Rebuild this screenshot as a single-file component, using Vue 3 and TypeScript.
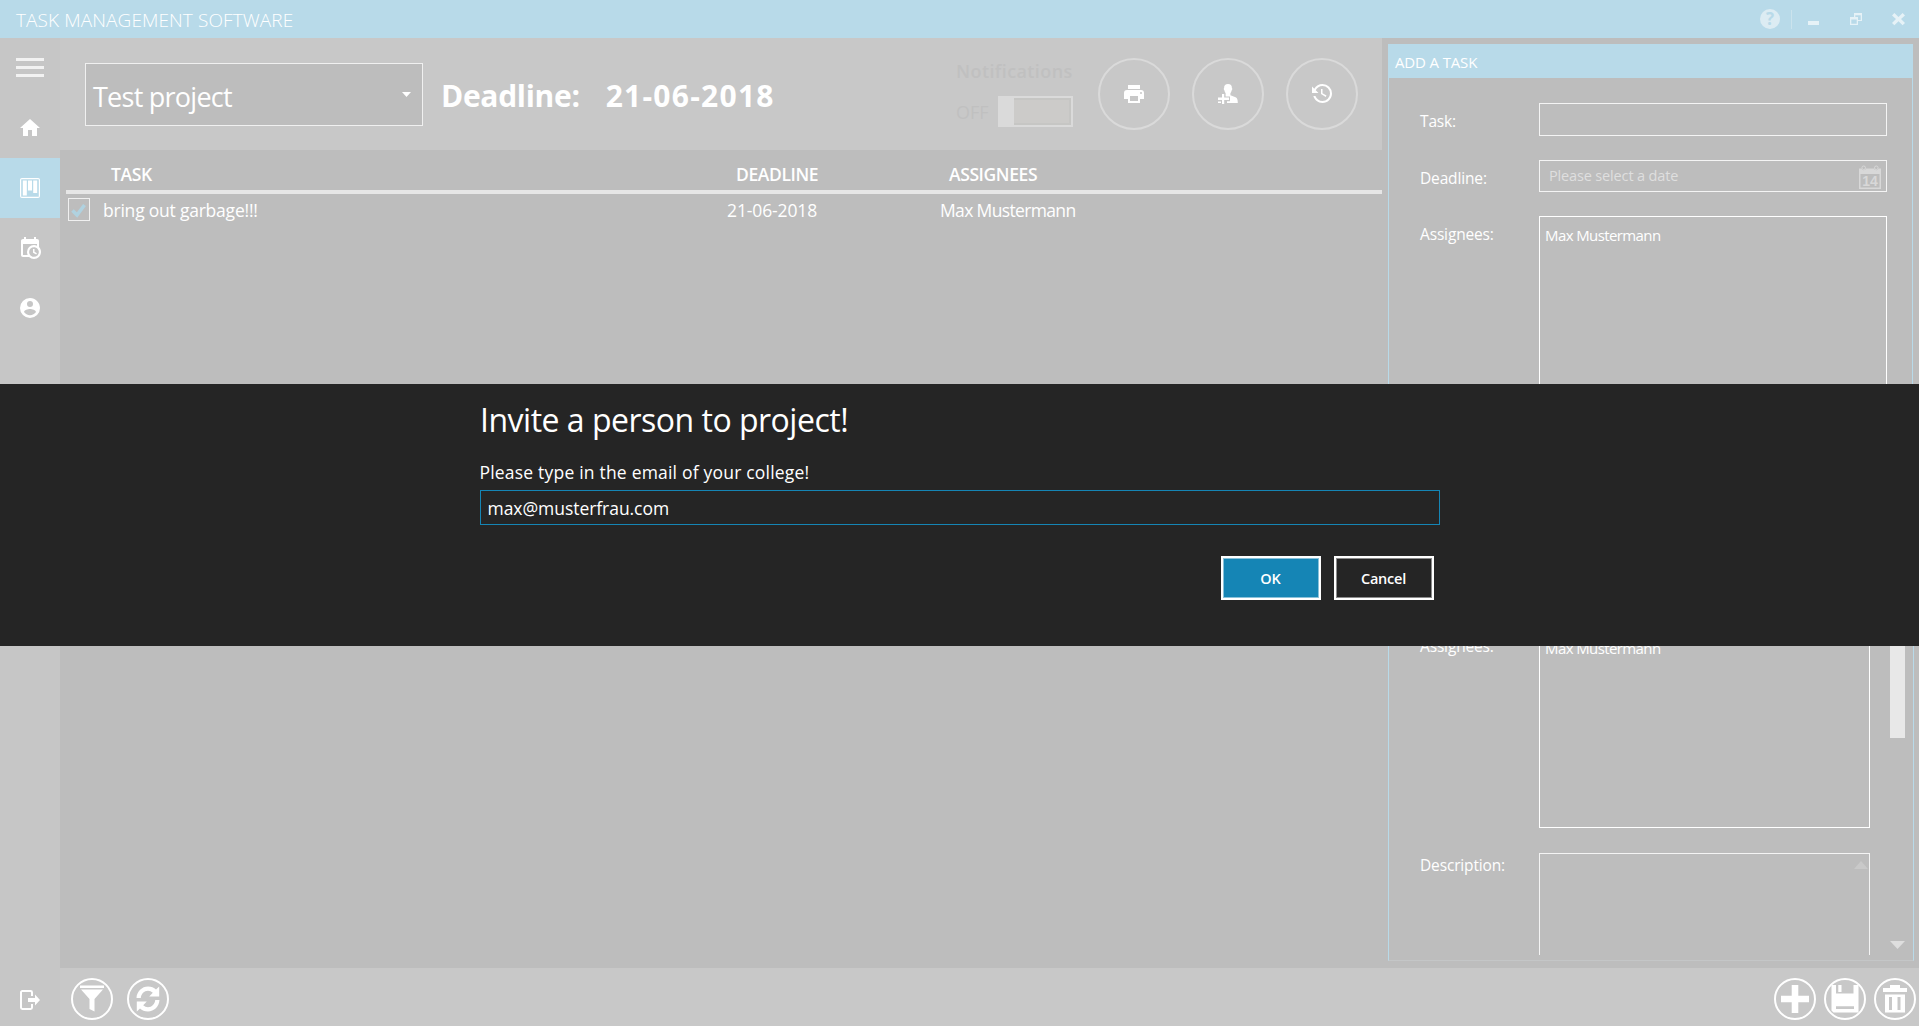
<script setup lang="ts">
import { ref } from 'vue'

interface NavItem {
  name: string
  path: string
  active?: boolean
}

interface Task {
  title: string
  deadline: string
  assignees: string
  done: boolean
}

const navItems: NavItem[] = [
  { name: 'home', path: 'M10,20V14H14V20H19V12H22L12,3L2,12H5V20H10Z' },
  {
    name: 'board',
    active: true,
    path: 'M4,2H20A2,2 0 0,1 22,4V20A2,2 0 0,1 20,22H4A2,2 0 0,1 2,20V4A2,2 0 0,1 4,2M3.6,3.2A0.5,0.5 0 0,0 3.2,3.6V20.4A0.5,0.5 0 0,0 3.6,20.8H20.4A0.5,0.5 0 0,0 20.8,20.4V3.6A0.5,0.5 0 0,0 20.4,3.2ZM4.8,4.4H8.8V19.4H4.8ZM10,4.4H14V14.4H10ZM15.2,4.4H19.2V17H15.2Z'
  },
  {
    name: 'schedule',
    path: 'M15,13H16.5V15.82L18.94,17.23L18.19,18.53L15,16.69V13M19,8H5V19H9.67C9.24,18.09 9,17.07 9,16A7,7 0 0,1 16,9C17.07,9 18.09,9.24 19,9.67V8M5,21C3.89,21 3,20.1 3,19V5C3,3.89 3.89,3 5,3H6V1H8V3H16V1H18V3H19A2,2 0 0,1 21,5V11.1C22.24,12.36 23,14.09 23,16A7,7 0 0,1 16,23C14.09,23 12.36,22.24 11.1,21H5M16,11.15A4.85,4.85 0 0,0 11.15,16C11.15,18.68 13.32,20.85 16,20.85A4.85,4.85 0 0,0 20.85,16C20.85,13.32 18.68,11.15 16,11.15Z'
  },
  {
    name: 'account',
    path: 'M12,19.2C9.5,19.2 7.29,17.92 6,16C6.03,14 10,12.9 12,12.9C14,12.9 17.97,14 18,16C16.71,17.92 14.5,19.2 12,19.2M12,5A3,3 0 0,1 15,8A3,3 0 0,1 12,11A3,3 0 0,1 9,8A3,3 0 0,1 12,5M12,2A10,10 0 0,0 2,12A10,10 0 0,0 12,22A10,10 0 0,0 22,12C22,6.47 17.5,2 12,2Z'
  }
]

const headerActions: NavItem[] = [
  {
    name: 'print',
    path: 'M18,3H6V7H18M19,12A1,1 0 0,1 18,11A1,1 0 0,1 19,10A1,1 0 0,1 20,11A1,1 0 0,1 19,12M16,19H8V14H16M19,8H5A3,3 0 0,0 2,11V17H6V21H18V17H22V11A3,3 0 0,0 19,8Z'
  },
  {
    name: 'invite',
    path: 'M12,2C14.6,2 16,3.6 15.9,6C16.6,6.3 16.3,8 15.6,8.4C15.3,9.8 14.8,10.6 14.4,11V13.2L19.6,15.2C21.4,16 21.7,17.6 21.8,21H11V19.2H14V14.6H9.6V11C9.2,10.5 8.7,9.7 8.5,8.4C7.8,8 7.5,6.4 8.1,6C8,3.6 9.4,2 12,2ZM6,12H8.2V15.6H13V18H8.2V22H6V18H2V15.6H6ZM2,19.4H5V21H2Z'
  },
  {
    name: 'history',
    path: 'M11,7V12.11L15.71,14.9L16.5,13.62L12.5,11.25V7M12.5,2C8.97,2 5.91,3.92 4.27,6.77L2,4.5V11H8.5L5.75,8.25C6.96,5.73 9.5,4 12.5,4A7.5,7.5 0 0,1 20,11.5A7.5,7.5 0 0,1 12.5,19C9.23,19 6.47,16.91 5.44,14H3.34C4.44,18.03 8.11,21 12.5,21C17.74,21 22,16.75 22,11.5A9.5,9.5 0 0,0 12.5,2Z'
  }
]

const leftTools: NavItem[] = [
  { name: 'filter', path: 'M9,7.5H33V10H9ZM10,11.5H32L23.5,21V33.5L18.5,31V21Z' },
  {
    name: 'refresh',
    path: 'M9.5,20C9.8,13.5 15,8.6 21,8.6C24.3,8.6 27,9.8 29,11.6L32.2,8.4V18.4H22.2L25.8,14.8C24.4,13.5 22.8,12.8 21,12.8C17.2,12.8 14,16 13.8,20ZM32.5,22C32.2,28.5 27,33.4 21,33.4C17.7,33.4 15,32.2 13,30.4L9.8,33.6V23.6H19.8L16.2,27.2C17.6,28.5 19.2,29.2 21,29.2C24.8,29.2 28,26 28.2,22Z'
  }
]

const rightTools: NavItem[] = [
  { name: 'add', path: 'M17.7,7H24.3V17.7H35V24.3H24.3V35H17.7V24.3H7V17.7H17.7Z' },
  {
    name: 'save',
    path: 'M7.5,7H12V15.5H29.5V7H34.5V34.5H9.5L7.5,32.5ZM14.3,7H17.5V14H14.3ZM12,28.3V31H30V28.3Z'
  },
  {
    name: 'delete',
    path: 'M16,7H26V10H33V14H9V10H16ZM11,16.5H31V34.5H11ZM15,19V32H18V19ZM23.5,19V32H26.5V19Z'
  }
]

const tasks = ref<Task[]>([
  { title: 'bring out garbage!!!', deadline: '21-06-2018', assignees: 'Max Mustermann', done: true }
])
const email = ref('max@musterfrau.com')
</script>

<template>
  <div class="window">
    <header class="titlebar">
      <span class="title">TASK MANAGEMENT SOFTWARE</span>
      <div class="window-buttons">
        <span class="help">?</span>
        <i class="divider"></i>
        <svg class="win-icons" width="113" height="38" viewBox="0 0 113 38">
          <path d="M10,21H21V25H10Z" />
          <path fill-rule="evenodd" d="M56,13H64V21H60V25H52V17H56ZM57.3,17H60V20H62.7V15.3H57.3ZM53.3,19.5V23.7H58.7V19.5Z" />
          <path d="M94,15.4L96.4,13L100.5,17L104.6,13L107,15.4L103,19L107,23L104.6,25.2L100.5,21.3L96.4,25.2L94,23L98,19Z" />
        </svg>
      </div>
    </header>

    <div class="body">
      <nav class="sidebar">
        <div class="hamburger"><i></i><i></i><i></i></div>
        <div v-for="item in navItems" :key="item.name" class="nav-item" :class="{ active: item.active }">
          <svg width="24" height="24" viewBox="0 0 24 24"><path fill-rule="evenodd" :d="item.path" /></svg>
        </div>
        <div class="nav-item logout">
          <svg width="24" height="24" viewBox="0 0 24 24">
            <path class="frame" d="M14,8V4.4A1.4,1.4 0 0,0 12.600,3H4.4A1.4,1.4 0 0,0 3,4.4V19.6A1.4,1.4 0 0,0 4.4,21H12.6A1.4,1.4 0 0,0 14,19.6V16" />
            <path d="M10,10H17V6.5L22,12L17,17.5V14H10Z" />
          </svg>
        </div>
      </nav>

      <div class="workspace">
        <div class="columns">
          <main class="content">
            <section class="project-bar">
              <div class="select">
                <span>Test project</span>
                <i class="caret"></i>
              </div>
              <div class="deadline"><b>Deadline:</b><b class="date">21-06-2018</b></div>
              <div class="notifications">
                <span class="caption">Notifications</span>
                <div class="switch-row">
                  <span>OFF</span>
                  <span class="switch"><i></i></span>
                </div>
              </div>
              <div class="actions">
                <button v-for="a in headerActions" :key="a.name" class="round">
                  <svg width="24" height="24" viewBox="0 0 24 24"><path fill-rule="evenodd" :d="a.path" /></svg>
                </button>
              </div>
            </section>

            <section class="table">
              <div class="row head">
                <span class="c-task">TASK</span>
                <span class="c-date">DEADLINE</span>
                <span class="c-who">ASSIGNEES</span>
              </div>
              <div v-for="t in tasks" :key="t.title" class="row item">
                <span class="check">
                  <svg v-if="t.done" width="20" height="21" viewBox="0 0 20 21"><path d="M3.5,11.5L8,16L15.5,6" /></svg>
                </span>
                <span class="c-task">{{ t.title }}</span>
                <span class="c-date">{{ t.deadline }}</span>
                <span class="c-who">{{ t.assignees }}</span>
              </div>
            </section>
          </main>

          <aside class="side">
            <section class="panel add">
              <h2>ADD A TASK</h2>
              <div class="form">
                <div class="field">
                  <label>Task:</label>
                  <div class="box"></div>
                </div>
                <div class="field date-field">
                  <label>Deadline:</label>
                  <div class="box date">
                    <span>Please select a date</span>
                    <svg width="24" height="25" viewBox="0 0 24 25">
                      <path fill-rule="evenodd" d="M1,3.5H3.5A2.3,2.3 0 0,0 8,3.5H16A2.3,2.3 0 0,0 20.5,3.5H23V24H1ZM2.5,9V22.5H21.5V9Z" />
                      <circle cx="5.7" cy="2.8" r="1.8" /><circle cx="18.3" cy="2.8" r="1.8" />
                      <text x="12" y="20.6" text-anchor="middle">14</text>
                    </svg>
                  </div>
                </div>
                <div class="field">
                  <label>Assignees:</label>
                  <div class="box list">Max Mustermann</div>
                </div>
              </div>
            </section>

            <section class="panel edit">
              <h2></h2>
              <div class="scroll">
                <div class="form">
                  <div class="field date-field">
                    <label></label>
                    <div class="box date"></div>
                  </div>
                  <div class="field who-field">
                    <label>Assignees:</label>
                    <div class="box list">Max Mustermann</div>
                  </div>
                  <div class="field desc-field">
                    <label>Description:</label>
                    <div class="box text"><i class="up"></i></div>
                  </div>
                </div>
                <div class="scrollbar">
                  <i class="thumb"></i>
                  <i class="down"></i>
                </div>
              </div>
            </section>
          </aside>
        </div>

        <footer class="toolbar">
          <div class="tools">
            <svg v-for="t in leftTools" :key="t.name" width="42" height="42" viewBox="0 0 42 42">
              <circle cx="21" cy="21" r="20" /><path fill-rule="evenodd" :d="t.path" />
            </svg>
          </div>
          <div class="tools right">
            <svg v-for="t in rightTools" :key="t.name" width="42" height="42" viewBox="0 0 42 42">
              <circle cx="21" cy="21" r="20" /><path fill-rule="evenodd" :d="t.path" />
            </svg>
          </div>
        </footer>
      </div>
    </div>

    <div class="dialog">
      <div class="dialog-body">
        <h1>Invite a person to project!</h1>
        <p>Please type in the email of your college!</p>
        <input v-model="email" type="text" />
        <div class="dialog-buttons">
          <button class="ok">OK</button>
          <button class="cancel">Cancel</button>
        </div>
      </div>
    </div>
  </div>
</template>

<style>
body {
  margin: 0;
  overflow: hidden;
}
</style>

<style scoped>
* {
  box-sizing: border-box;
}

.window {
  position: relative;
  display: flex;
  flex-direction: column;
  width: 1919px;
  height: 1026px;
  overflow: hidden;
  background: #bdbdbd;
  color: #fff;
  font-family: 'Open Sans', 'Noto Sans', sans-serif;
  font-size: 17.5px;
  white-space: nowrap;
}

svg path {
  fill: #fff;
}

/* title bar */
.titlebar {
  flex: none;
  display: flex;
  align-items: center;
  height: 38px;
  padding: 0 8px 0 16px;
  background: #b8dae9;
}

.title {
  margin-top: 2px;
  font-size: 19px;
  font-weight: 300;
  letter-spacing: 0.1px;
  line-height: 38px;
}

.window-buttons {
  display: flex;
  align-items: center;
  height: 38px;
  margin-left: auto;
}

.help {
  width: 20px;
  height: 20px;
  border-radius: 50%;
  background: #dcecf3;
  color: #b8dae9;
  font-size: 17px;
  font-weight: 700;
  line-height: 20px;
  text-align: center;
}

.divider {
  width: 1px;
  height: 19px;
  margin: 0 6px 0 11px;
  background: #cbe3ed;
}

.win-icons path {
  fill: #e6f2f7;
}

/* navigation */
.body {
  flex: 1;
  display: flex;
  min-height: 0;
}

.sidebar {
  flex: none;
  display: flex;
  flex-direction: column;
  width: 60px;
  background: #c6c6c6;
}

.hamburger {
  display: flex;
  flex-direction: column;
  gap: 5px;
  height: 60px;
  padding: 20px 16px 0;
}

.hamburger i {
  height: 3px;
  background: #f2f2f2;
}

.nav-item {
  display: flex;
  align-items: center;
  justify-content: center;
  height: 60px;
}

.nav-item.active {
  background: #b8dae9;
}

.nav-item.logout {
  height: 52px;
  margin-top: auto;
}

.logout .frame {
  fill: none;
  stroke: #fff;
  stroke-width: 2;
}

.workspace {
  flex: 1;
  display: flex;
  flex-direction: column;
  min-width: 0;
}

.columns {
  flex: 1;
  display: flex;
  min-height: 0;
}

/* project bar */
.content {
  width: 1322px;
}

.project-bar {
  display: flex;
  height: 112px;
  padding-left: 25px;
  background: #c8c8c8;
}

.select {
  display: flex;
  justify-content: space-between;
  width: 338px;
  height: 63px;
  margin-top: 25px;
  padding: 0 11px 0 7px;
  border: 1px solid #f0f0f0;
  background: #bdbdbd;
  font-size: 27px;
  letter-spacing: -0.75px;
  line-height: 65px;
}

.caret {
  width: 9px;
  height: 5px;
  margin-top: 28px;
  background: #fff;
  clip-path: polygon(0 0, 100% 0, 50% 100%);
}

.deadline {
  width: 514px;
  padding: 38px 0 0 18px;
  font-size: 30px;
  letter-spacing: -0.3px;
  line-height: 40px;
}

.deadline .date {
  margin-left: 26px;
  letter-spacing: 1.25px;
}

.notifications {
  width: 118px;
  margin-left: 19px;
  padding-top: 21px;
  color: #c0c0c0;
  font-size: 18px;
  font-weight: 600;
  line-height: 24px;
}

.caption {
  letter-spacing: 0.4px;
}

.switch-row {
  display: flex;
  gap: 9px;
  align-items: center;
  height: 31px;
  margin-top: 13px;
  font-weight: 400;
}

.switch {
  width: 75px;
  height: 31px;
  padding: 2px 2px 2px 16px;
  background: #dadada;
}

.switch i {
  display: block;
  height: 27px;
  border: 2px solid #c6c6c4;
  border-left: 0;
  background: #cccbc9;
}

.actions {
  display: flex;
  gap: 21.75px;
  margin-left: 24px;
  padding-top: 20px;
}

.round {
  display: flex;
  align-items: center;
  justify-content: center;
  width: 72px;
  height: 72px;
  padding: 0;
  border: 2px solid #dadada;
  border-radius: 50%;
  background: none;
}

/* table */
.row {
  display: flex;
}

.head {
  height: 44px;
  margin-left: 6px;
  padding-left: 45px;
  border-bottom: 4px solid #e6e6e6;
  font-weight: 600;
  letter-spacing: -0.4px;
  line-height: 48px;
}

.head .c-task {
  width: 625px;
}

.head .c-date {
  width: 213px;
}

.item {
  height: 36px;
  padding-left: 8px;
  line-height: 33px;
}

.check {
  width: 22px;
  height: 23px;
  margin: 4px 13px 0 0;
  border: 1px solid #f0f0f0;
}

.check svg {
  display: block;
}

.check path {
  fill: none;
  stroke: #b0d2e0;
  stroke-width: 3.5;
}

.item .c-task {
  width: 624px;
  letter-spacing: -0.22px;
}

.item .c-date {
  width: 213px;
  letter-spacing: -0.12px;
}

.item .c-who {
  letter-spacing: -0.65px;
}

/* side panels */
.side {
  display: flex;
  flex-direction: column;
  gap: 6px;
  padding: 6px 0 7px 6px;
  font-size: 15.5px;
}

.panel {
  width: 525px;
  border: 1px solid #b8dae9;
}

.panel.add {
  height: 456px;
}

.panel.edit {
  flex: 1;
  display: flex;
  flex-direction: column;
  width: 526px;
  min-height: 0;
  border-bottom-color: #c4c6c7;
}

.panel h2 {
  flex: none;
  height: 33px;
  margin: 0;
  padding-left: 6px;
  background: #b8dae9;
  font-size: 15px;
  font-weight: 400;
  letter-spacing: -0.15px;
  line-height: 35px;
}

.form {
  width: 498px;
  padding: 25px 0 0 31px;
}

.field {
  display: flex;
  height: 57px;
}

.field label {
  width: 119px;
  margin-top: 8px;
  letter-spacing: -0.15px;
  line-height: 20px;
}

.box {
  flex: 1;
  height: 33px;
  border: 1px solid #f4f4f4;
}

.field.date-field {
  height: 56px;
}

.date-field label {
  margin-top: 8px;
}

.box.date {
  display: flex;
  justify-content: space-between;
  height: 32px;
  padding: 4px 4px 0 9px;
  color: #dfdfdf;
  font-size: 14.5px;
  letter-spacing: -0.15px;
  line-height: 22px;
}

.box.date path,
.box.date text {
  fill: #d8d8d8;
}

.box.date circle {
  fill: none;
  stroke: #d8d8d8;
}

.box.date text {
  font-family: 'Liberation Sans', sans-serif;
  font-size: 14px;
  font-weight: 700;
}

.box.list {
  height: 200px;
  padding: 8px 0 0 5px;
  border-color: #fff;
  font-size: 15px;
  letter-spacing: -0.6px;
  line-height: 20px;
}

.scroll {
  flex: 1;
  display: flex;
  min-height: 0;
  margin-bottom: 5px;
  overflow: hidden;
}

.edit .form {
  width: 481px;
  padding-top: 33px;
}

.edit .who-field {
  height: 224px;
}

.edit .box.list {
  height: 199px;
}

.edit .who-field label {
  margin-top: 7px;
}

.edit .desc-field label {
  margin-top: 2px;
}

.box.text {
  height: 200px;
  padding: 7px 1px;
}

.up {
  display: block;
  width: 14px;
  height: 8px;
  margin-left: auto;
  background: #c9c9c9;
  clip-path: polygon(50% 0, 100% 100%, 0 100%);
}

.scrollbar {
  display: flex;
  flex-direction: column;
  justify-content: space-between;
  width: 15px;
  margin-left: 20px;
  padding: 20px 0 6px;
}

.thumb {
  height: 178px;
  background: #e8e8e8;
}

.down {
  height: 8px;
  background: #dedede;
  clip-path: polygon(0 0, 100% 0, 50% 100%);
}

/* bottom toolbar */
.toolbar {
  flex: none;
  display: flex;
  justify-content: space-between;
  height: 58px;
  padding: 10px 3px 0 10.5px;
  background: #c8c8c8;
}

.tools {
  display: flex;
  gap: 14.5px;
}

.tools.right {
  gap: 8px;
}

.tools circle {
  fill: none;
  stroke: #fff;
  stroke-width: 2;
}

/* dialog */
.dialog {
  position: absolute;
  top: 384px;
  left: 0;
  display: flex;
  justify-content: center;
  width: 100%;
  height: 262px;
  background: #252525;
}

.dialog-body {
  width: 960px;
  padding-top: 14px;
}

.dialog h1 {
  margin: 0;
  padding-left: 0.5px;
  font-size: 32px;
  font-weight: 400;
  letter-spacing: -0.5px;
  line-height: 44px;
}

.dialog p {
  margin: 18px 0 0;
  letter-spacing: 0.2px;
  line-height: 24px;
}

.dialog input {
  display: block;
  width: 960px;
  height: 35px;
  margin-top: 6px;
  padding: 0 7px;
  border: 1px solid #1585b5;
  outline: none;
  background: transparent;
  color: #fff;
  font: inherit;
  letter-spacing: -0.05px;
}

.dialog-buttons {
  display: flex;
  justify-content: flex-end;
  gap: 13px;
  margin-top: 31px;
  padding-right: 6px;
}

.dialog-buttons button {
  width: 100px;
  height: 44px;
  padding: 0;
  border: 2px solid #fff;
  background: #252525;
  box-shadow: inset 0 0 0 1px #8c8c8c;
  color: #fff;
  font: 600 14.5px 'Open Sans', 'Noto Sans', sans-serif;
  letter-spacing: -0.2px;
}

.dialog-buttons .ok {
  background: #1585b5;
  box-shadow: inset 0 0 0 1px #8ac2da;
}
</style>
